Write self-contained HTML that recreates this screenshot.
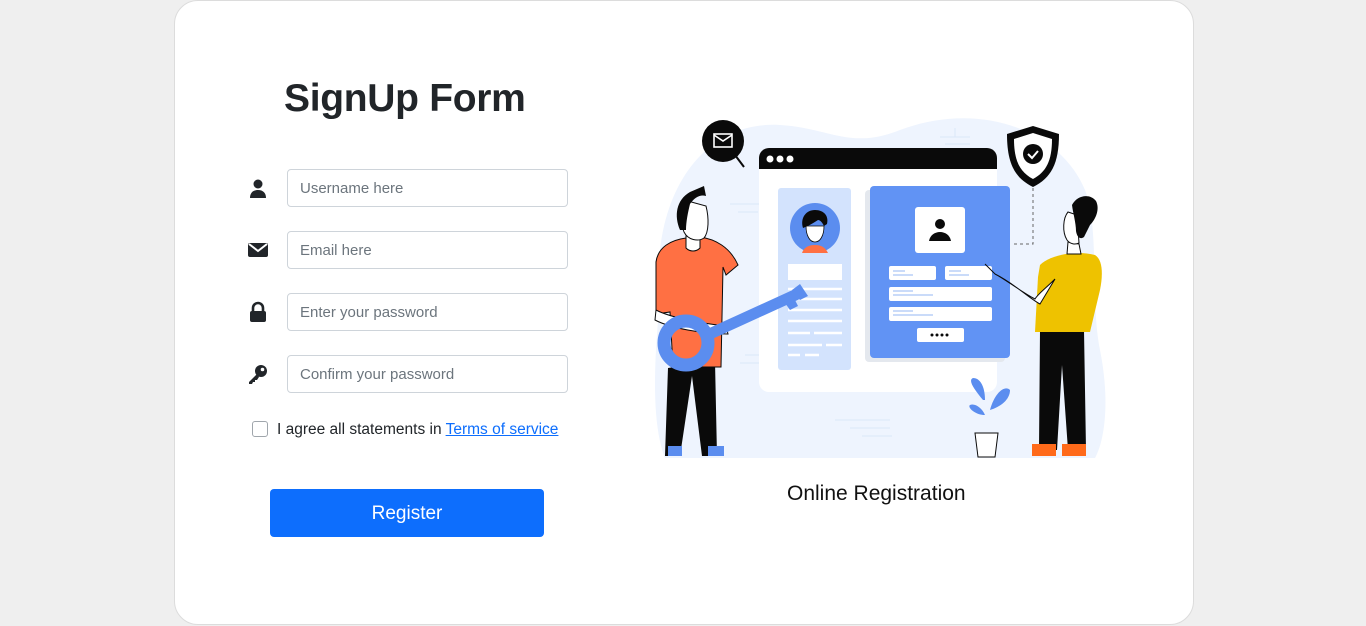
<!DOCTYPE html>
<html><head><meta charset="utf-8"><style>
*{box-sizing:border-box;margin:0;padding:0}
body{width:1366px;height:626px;background:#efefef;font-family:"Liberation Sans",sans-serif;position:relative;overflow:hidden}
.card{position:absolute;left:174px;top:0;width:1020px;height:625px;background:#fff;border:1px solid #dcdcdc;border-radius:24px}
h1{position:absolute;left:284px;top:77px;font-size:39px;font-weight:bold;color:#212529;letter-spacing:-0.3px}
.in{position:absolute;left:287px;width:281px;height:38px;border:1px solid #ced4da;border-radius:4px;padding-left:12px;line-height:38px;font-size:15px;color:#6c757d}
.ic{position:absolute;left:247px;width:22px;height:22px}
.cb{position:absolute;left:252px;top:421px;width:16px;height:16px;border:1px solid #a0a6ac;border-radius:3px}
.agree{position:absolute;left:277px;top:421px;font-size:15.5px;color:#212529}
.agree a{color:#0d6efd;text-decoration:underline}
.btn{position:absolute;left:270px;top:489px;width:274px;height:48px;background:#0d6efd;border-radius:4px;color:#fff;font-size:19px;text-align:center;line-height:50px}
.cap{position:absolute;left:787px;top:482px;font-size:21px;color:#111}
svg.ill{position:absolute;left:0;top:0}
</style></head><body>
<div class="card"></div>
<h1>SignUp Form</h1>
<svg class="ic" style="top:177px" viewBox="0 0 22 22"><circle cx="11" cy="7" r="4.5" fill="#212529"/><path d="M3 21c0-5 3-8 8-8s8 3 8 8z" fill="#212529"/></svg>
<div class="in" style="top:169px">Username here</div>
<svg class="ic" style="top:239px" viewBox="0 0 22 22"><rect x="1" y="4" width="20" height="14" rx="2" fill="#212529"/><path d="M2 5l9 7 9-7" stroke="#fff" stroke-width="2" fill="none"/></svg>
<div class="in" style="top:231px">Email here</div>
<svg class="ic" style="top:301px" viewBox="0 0 22 22"><path d="M6 10V7a5 5 0 0 1 10 0v3" stroke="#212529" stroke-width="2.6" fill="none"/><rect x="3" y="10" width="16" height="11" rx="2" fill="#212529"/></svg>
<div class="in" style="top:293px">Enter your password</div>
<svg class="ic" style="top:363px" viewBox="0 0 22 22"><circle cx="14" cy="8" r="6" fill="#212529"/><circle cx="15.5" cy="6.5" r="1.8" fill="#fff"/><path d="M10 11L2 19v2h3l1-2h2v-2h2l2-3z" fill="#212529"/></svg>
<div class="in" style="top:355px">Confirm your password</div>
<div class="cb"></div>
<div class="agree">I agree all statements in <a>Terms of service</a></div>
<div class="btn">Register</div>
<div class="cap">Online Registration</div>
<svg class="ill" width="1366" height="626" viewBox="0 0 1366 626">
<path d="M660 300 C650 200 700 120 780 125 C830 128 850 150 900 130 C980 100 1060 130 1085 190 C1100 230 1090 300 1100 350 C1110 400 1105 440 1095 458 L665 458 C650 420 655 350 660 300Z" fill="#eef4fe"/>
<g stroke="#dbe7f8" stroke-width="1"><path d="M940 137h30M955 128v9M945 144h25M730 204h30M738 212h20M835 420h55M850 428h40M862 436h30M745 355h15M740 363h20"/></g>
<rect x="759" y="148" width="238" height="244" rx="10" fill="#fff"/>
<path d="M759 169v-11a10 10 0 0 1 10-10h218a10 10 0 0 1 10 10v11z" fill="#0a0a0a"/>
<circle cx="770" cy="159" r="3.5" fill="#fff"/><circle cx="780" cy="159" r="3.5" fill="#fff"/><circle cx="790" cy="159" r="3.5" fill="#fff"/>
<rect x="778" y="188" width="73" height="182" rx="3" fill="#d3e3fd"/>
<circle cx="815" cy="228" r="25" fill="#5b8def"/>
<path d="M806 226c0 10 4 16 9 16s9-6 9-16z" fill="#fff" stroke="#0a0a0a" stroke-width="0.8"/>
<path d="M803 228c-3-10 3-18 12-18 9 0 14 6 12 14l-3 2c-2-4-4-6-6-6-6 4-10 6-15 8z" fill="#0a0a0a"/>
<path d="M802 253c2-6 7-8 13-8s10 2 13 8z" fill="#ff7043"/>
<rect x="788" y="264" width="54" height="16" fill="#fff"/>
<g stroke="#fff" stroke-width="2.5"><path d="M788 289h54M788 299h54M788 310h54M788 321h54M788 333h22M814 333h28M788 345h34M826 345h16M788 355h12M805 355h14"/></g>
<rect x="865" y="190" width="140" height="172" rx="4" fill="#e4e8ee"/>
<rect x="870" y="186" width="140" height="172" rx="4" fill="#6193f4"/>
<rect x="915" y="207" width="50" height="46" rx="3" fill="#fff"/>
<circle cx="940" cy="224" r="5" fill="#0a0a0a"/><path d="M929 241c1-6 6-9 11-9s10 3 11 9z" fill="#0a0a0a"/>
<rect x="889" y="266" width="47" height="14" rx="2" fill="#fff"/><rect x="945" y="266" width="47" height="14" rx="2" fill="#fff"/>
<rect x="889" y="287" width="103" height="14" rx="2" fill="#fff"/><rect x="889" y="307" width="103" height="14" rx="2" fill="#fff"/>
<g stroke="#b9cff7" stroke-width="1.5"><path d="M893 271h12M893 275h20M949 271h12M949 275h20M893 291h20M893 295h40M893 311h20M893 315h40"/></g>
<rect x="917" y="328" width="47" height="14" rx="2" fill="#fff"/>
<g fill="#0a0a0a"><circle cx="932" cy="335" r="1.5"/><circle cx="937" cy="335" r="1.5"/><circle cx="942" cy="335" r="1.5"/><circle cx="947" cy="335" r="1.5"/></g>
<circle cx="723" cy="141" r="21" fill="#0a0a0a"/><rect x="714" y="134" width="18" height="13" fill="none" stroke="#fff" stroke-width="1.6"/><path d="M714 135l9 6 9-6" stroke="#fff" stroke-width="1.6" fill="none"/><path d="M735 155l9 12" stroke="#0a0a0a" stroke-width="2"/>
<path d="M1033 126l26 8c0 30-8 44-26 53-18-9-26-23-26-53z" fill="#0a0a0a"/><path d="M1033 133l19 6c0 22-6 33-19 40-13-7-19-18-19-40z" fill="#fff"/>
<circle cx="1033" cy="154" r="10" fill="#0a0a0a"/><path d="M1028 154l4 4 6-7" stroke="#fff" stroke-width="2" fill="none"/>
<path d="M1033 188v56h-22" stroke="#666" stroke-dasharray="3 3" fill="none"/>
<path d="M668 368l-3 88h15l12-80 10 80h15l-2-95z" fill="#0a0a0a"/>
<path d="M668 446h14v10h-14zM708 446h16v10h-16z" fill="#5b8def"/>
<path d="M656 262c2-15 15-22 30-24l14-1c15 2 30 10 38 28l-12 10-3-8-2 100h-48l-3-55-14 2z" fill="#ff7043" stroke="#0a0a0a" stroke-width="1"/>
<path d="M656 310c15 8 50 14 70 16l2 8c-25 0-58-6-73-14z" fill="#fff" stroke="#0a0a0a" stroke-width="1"/>
<circle cx="686" cy="343" r="22" fill="none" stroke="#5b8def" stroke-width="13"/>
<path d="M705 330l92-42 5 10-92 42z" fill="#5b8def"/><path d="M780 296l10 14 8-4-6-12zM792 290l8 10 8-4-8-12z" fill="#5b8def"/>
<path d="M686 236v12c4 4 10 4 14 0v-12z" fill="#fff" stroke="#0a0a0a" stroke-width="1"/>
<path d="M684 200c-4 8-4 22 0 32 4 8 14 10 20 6 5-6 5-20 2-32z" fill="#fff" stroke="#0a0a0a" stroke-width="1"/>
<path d="M680 230c-6-14-4-30 10-38l14-6 2 10c-6-2-12 2-16 8-2 8-4 18-4 26z" fill="#0a0a0a"/>
<path d="M1040 330l-1 120h18l5-85 6 85h18l-2-120z" fill="#0a0a0a"/>
<path d="M1032 444h24v12h-24zM1062 444h24v12h-24z" fill="#ff6a1a"/>
<path d="M1040 265c10-10 35-15 55-10 8 5 8 20 5 35l-10 42h-55l3-55z" fill="#eec200"/>
<path d="M985 264l10 10c20 10 35 25 45 30l15-25c-10 10-17 15-20 20-15-8-30-20-40-25z" fill="#fff" stroke="#0a0a0a" stroke-width="1"/>
<path d="M1068 242l-1 12h14l-2-10z" fill="#fff" stroke="#0a0a0a" stroke-width="1"/>
<path d="M1068 212c-5 6-6 20-1 28 3 4 8 5 12 3l-2-28z" fill="#fff" stroke="#0a0a0a" stroke-width="1"/>
<path d="M1072 205c5-10 18-12 24-4 4 8 0 18-6 24l-6 12c-4 3-7 0-8-6 0-8-3-18-4-26z" fill="#0a0a0a"/>
<path d="M983 400c-10-12-15-20-10-22 8 0 12 10 12 22zM990 410c5-18 15-25 20-20 0 10-10 17-20 20zM985 415c-10 0-18-8-15-10 5-2 12 3 15 10z" fill="#5b8def"/>
<path d="M975 433h23l-3 24h-17z" fill="#fff" stroke="#0a0a0a" stroke-width="1"/>
</svg>
</body></html>
